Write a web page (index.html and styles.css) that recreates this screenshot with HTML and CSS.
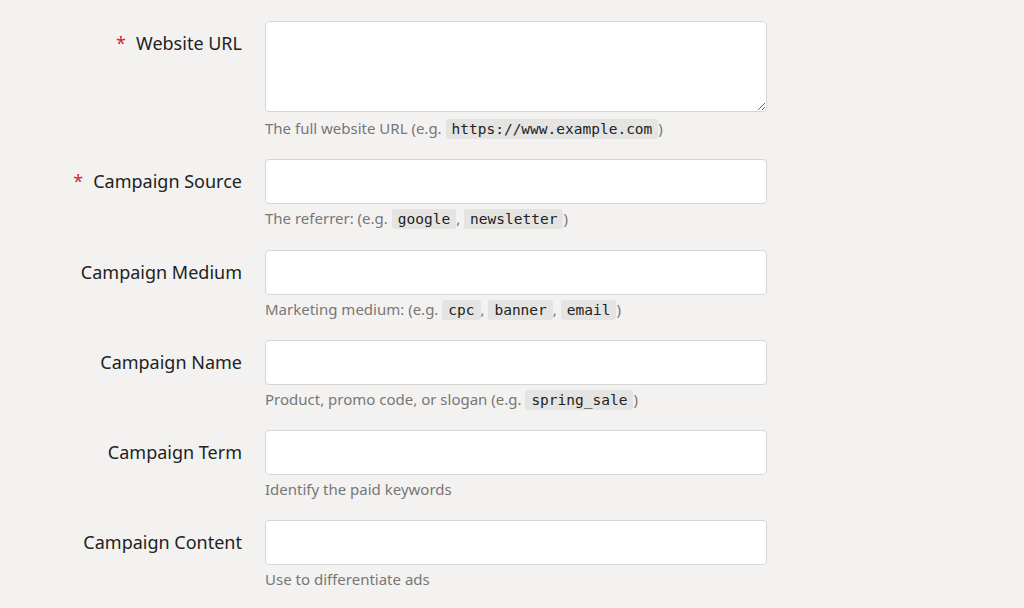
FILE: index.html
```html
<!DOCTYPE html>
<html lang="en">
<head>
  <meta charset="UTF-8">
  <title>Campaign URL Builder</title>
  <link rel="stylesheet" href="styles.css">
</head>
<body>
  <form class="builder">
    <div class="row">
      <label class="label" for="url"><span class="req">*</span>Website URL</label>
      <div class="field">
        <textarea id="url" class="input area"></textarea>
        <p class="hint">The full website URL (e.g. <code>https://www.example.com</code>)</p>
      </div>
    </div>

    <div class="row">
      <label class="label" for="source"><span class="req">*</span>Campaign Source</label>
      <div class="field">
        <input id="source" class="input" type="text">
        <p class="hint">The referrer: (e.g. <code>google</code>, <code>newsletter</code>)</p>
      </div>
    </div>

    <div class="row">
      <label class="label" for="medium">Campaign Medium</label>
      <div class="field">
        <input id="medium" class="input" type="text">
        <p class="hint">Marketing medium: (e.g. <code>cpc</code>, <code>banner</code>, <code>email</code>)</p>
      </div>
    </div>

    <div class="row">
      <label class="label" for="name">Campaign Name</label>
      <div class="field">
        <input id="name" class="input" type="text">
        <p class="hint">Product, promo code, or slogan (e.g. <code>spring_sale</code>)</p>
      </div>
    </div>

    <div class="row">
      <label class="label" for="term">Campaign Term</label>
      <div class="field">
        <input id="term" class="input" type="text">
        <p class="hint">Identify the paid keywords</p>
      </div>
    </div>

    <div class="row">
      <label class="label" for="content">Campaign Content</label>
      <div class="field">
        <input id="content" class="input" type="text">
        <p class="hint">Use to differentiate ads</p>
      </div>
    </div>
  </form>
</body>
</html>
```

FILE: styles.css
```css
body {
  margin: 0;
  padding: 0;
  font-family: 'Noto Sans', 'Open Sans', sans-serif;
  background-color: #f3f2f1;
  color: #222;
}

.builder {
  padding-top: 21px;
}

.row {
  display: flex;
  gap: 23px;
  margin-bottom: 20.25px;
}

.label {
  width: 242px;
  flex-shrink: 0;
  text-align: right;
  font-size: 18px;
  line-height: 44px;
  color: #222;
}

.req {
  color: #d0282c;
  margin-right: 10px;
}

.field {
  width: 502px;
}

.input {
  display: block;
  box-sizing: border-box;
  width: 100%;
  height: 45px;
  margin: 0;
  padding: 8px 12px;
  font-family: inherit;
  font-size: 16px;
  background-color: #fff;
  border: 1px solid #d6d6d6;
  border-radius: 4px;
}

.area {
  height: 91px;
  margin-bottom: 5px;
  resize: vertical;
}

.hint {
  margin: 3px 0 0;
  font-size: 15px;
  line-height: 22px;
  color: #777;
}

code {
  font-family: 'DejaVu Sans Mono', monospace;
  font-size: 14.5px;
  line-height: 1;
  color: #222;
  background-color: #e4e4e3;
  border-radius: 3px;
  padding: 2px 6px;
}
```
